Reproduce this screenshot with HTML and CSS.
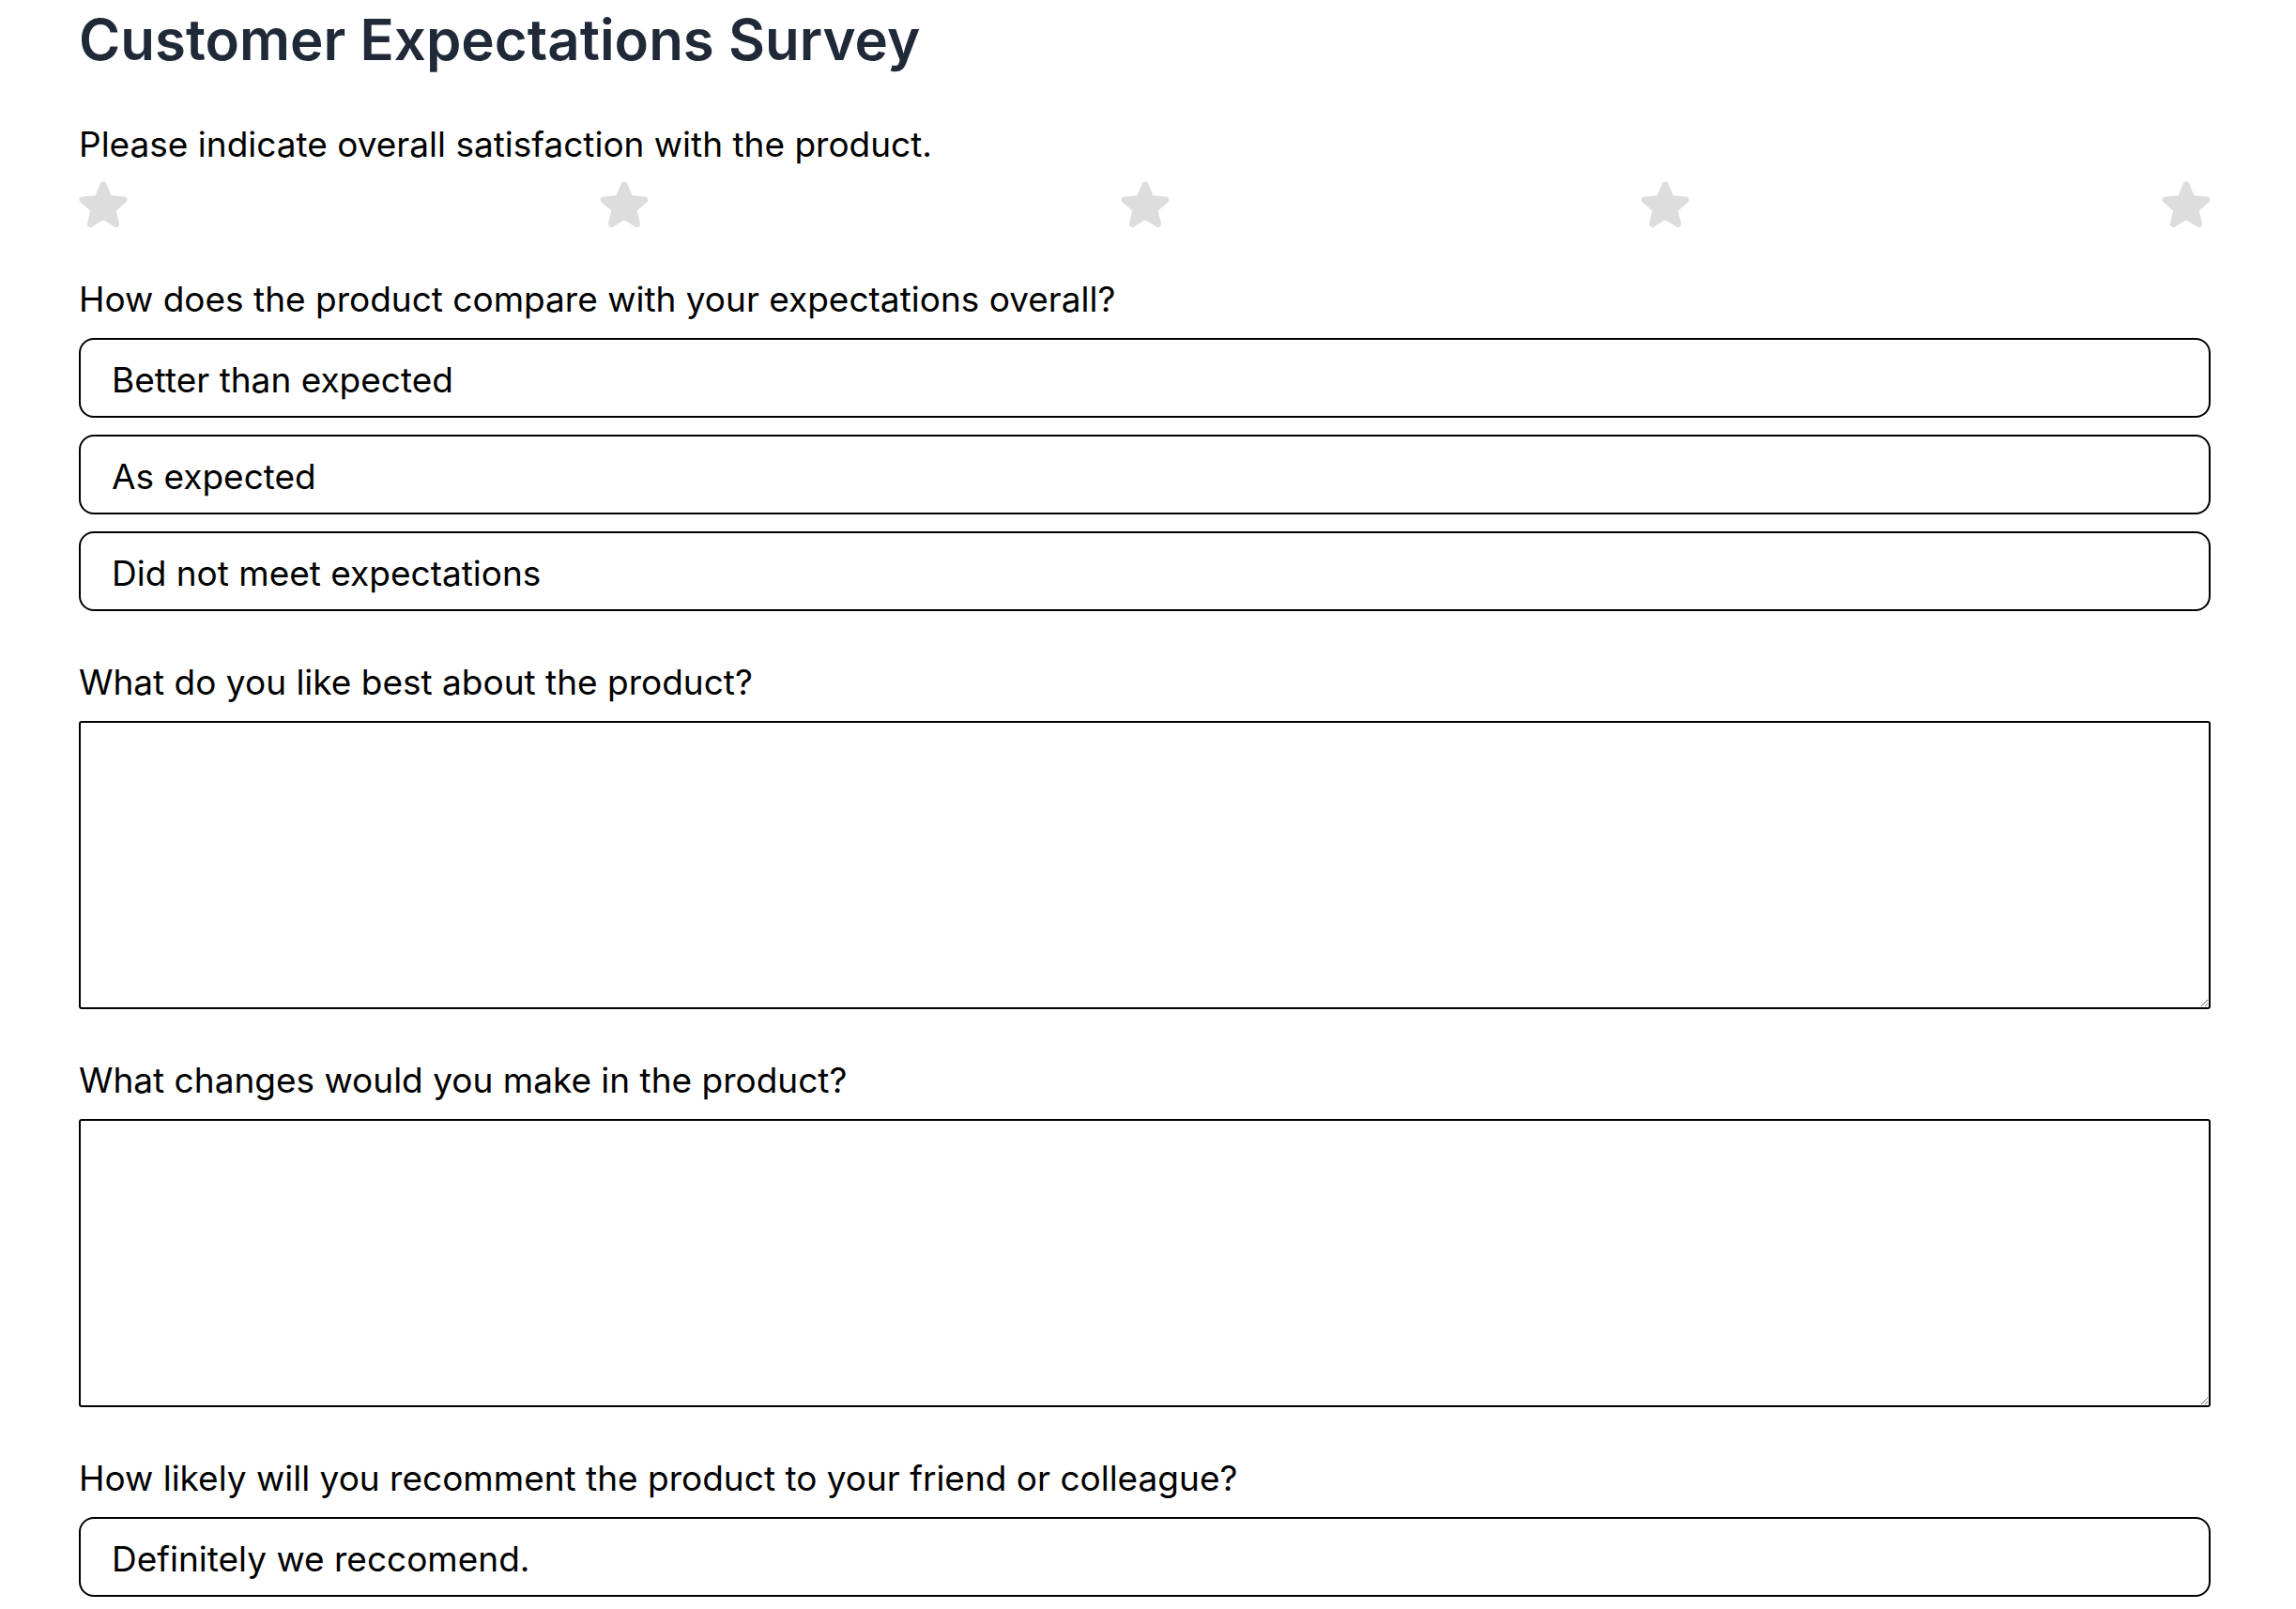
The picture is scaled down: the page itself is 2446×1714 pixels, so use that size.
FILE: index.html
```html
<!DOCTYPE html>
<html lang="en">
<head>
<meta charset="utf-8">
<title>Customer Expectations Survey</title>
<link rel="stylesheet" href="styles.css">
</head>
<body>
<main class="page">
  <h1 class="title">Customer Expectations Survey</h1>

  <section class="question first">
    <div class="label">Please indicate overall satisfaction with the product.</div>
    <div class="stars">
      <svg class="star" viewBox="1.9 2.4 20.2 19.2" aria-hidden="true"><path d="M10.788 3.21c.448-1.077 1.976-1.077 2.424 0l2.082 5.006 5.404.434c1.164.093 1.636 1.545.749 2.305l-4.117 3.527 1.257 5.273c.271 1.136-.964 2.033-1.96 1.425L12 18.354 7.373 21.18c-.996.608-2.231-.29-1.96-1.425l1.257-5.273-4.117-3.527c-.887-.76-.415-2.212.749-2.305l5.404-.434 2.082-5.005Z"/></svg>
      <svg class="star" viewBox="1.9 2.4 20.2 19.2" aria-hidden="true"><path d="M10.788 3.21c.448-1.077 1.976-1.077 2.424 0l2.082 5.006 5.404.434c1.164.093 1.636 1.545.749 2.305l-4.117 3.527 1.257 5.273c.271 1.136-.964 2.033-1.96 1.425L12 18.354 7.373 21.18c-.996.608-2.231-.29-1.96-1.425l1.257-5.273-4.117-3.527c-.887-.76-.415-2.212.749-2.305l5.404-.434 2.082-5.005Z"/></svg>
      <svg class="star" viewBox="1.9 2.4 20.2 19.2" aria-hidden="true"><path d="M10.788 3.21c.448-1.077 1.976-1.077 2.424 0l2.082 5.006 5.404.434c1.164.093 1.636 1.545.749 2.305l-4.117 3.527 1.257 5.273c.271 1.136-.964 2.033-1.96 1.425L12 18.354 7.373 21.18c-.996.608-2.231-.29-1.96-1.425l1.257-5.273-4.117-3.527c-.887-.76-.415-2.212.749-2.305l5.404-.434 2.082-5.005Z"/></svg>
      <svg class="star" viewBox="1.9 2.4 20.2 19.2" aria-hidden="true"><path d="M10.788 3.21c.448-1.077 1.976-1.077 2.424 0l2.082 5.006 5.404.434c1.164.093 1.636 1.545.749 2.305l-4.117 3.527 1.257 5.273c.271 1.136-.964 2.033-1.96 1.425L12 18.354 7.373 21.18c-.996.608-2.231-.29-1.96-1.425l1.257-5.273-4.117-3.527c-.887-.76-.415-2.212.749-2.305l5.404-.434 2.082-5.005Z"/></svg>
      <svg class="star" viewBox="1.9 2.4 20.2 19.2" aria-hidden="true"><path d="M10.788 3.21c.448-1.077 1.976-1.077 2.424 0l2.082 5.006 5.404.434c1.164.093 1.636 1.545.749 2.305l-4.117 3.527 1.257 5.273c.271 1.136-.964 2.033-1.96 1.425L12 18.354 7.373 21.18c-.996.608-2.231-.29-1.96-1.425l1.257-5.273-4.117-3.527c-.887-.76-.415-2.212.749-2.305l5.404-.434 2.082-5.005Z"/></svg>
    </div>
  </section>

  <section class="question">
    <div class="label">How does the product compare with your expectations overall?</div>
    <div class="options">
      <div class="option">Better than expected</div>
      <div class="option">As expected</div>
      <div class="option">Did not meet expectations</div>
    </div>
  </section>

  <section class="question">
    <div class="label">What do you like best about the product?</div>
    <textarea class="answer"></textarea>
  </section>

  <section class="question">
    <div class="label">What changes would you make in the product?</div>
    <textarea class="answer"></textarea>
  </section>

  <section class="question">
    <div class="label">How likely will you recomment the product to your friend or colleague?</div>
    <div class="options">
      <div class="option">Definitely we reccomend.</div>
    </div>
  </section>
</main>
</body>
</html>
```

FILE: styles.css
```css
html, body {
  margin: 0;
  padding: 0;
  background: #ffffff;
}

body {
  font-family: Inter, "Noto Sans", "Liberation Sans", sans-serif;
  color: #000000;
}

.page {
  padding: 7px 91px 0 84px;
  display: flex;
  flex-direction: column;
  gap: 46px;
}

.title {
  margin: 0;
  font-size: 60px;
  line-height: 70px;
  font-weight: 600;
  color: #1f2937;
}

.question {
  display: flex;
  flex-direction: column;
}

.question.first {
  margin-top: 2px;
}

.label {
  font-size: 37px;
  line-height: 54px;
  padding-top: 3px;
  margin-bottom: 14px;
}

.first .label {
  padding-top: 2px;
  margin-bottom: 15px;
}

.stars {
  display: flex;
  justify-content: space-between;
  align-items: flex-start;
  height: 52px;
  margin-top: -3px;
}

.first .stars {
  margin-bottom: -2px;
}

.star {
  width: 52px;
  height: 50px;
  fill: #dddddd;
  display: block;
}

.options {
  display: flex;
  flex-direction: column;
  gap: 18px;
}

.option {
  border: 2px solid #000000;
  border-radius: 16px;
  padding: 15px 33px 11px;
  font-size: 37px;
  line-height: 55px;
}

.answer {
  display: block;
  box-sizing: border-box;
  width: 100%;
  height: 307px;
  margin: 0;
  border: 2px solid #000000;
  border-radius: 3px;
  resize: vertical;
  font-family: inherit;
  font-size: 37px;
  background: #ffffff;
}
```
